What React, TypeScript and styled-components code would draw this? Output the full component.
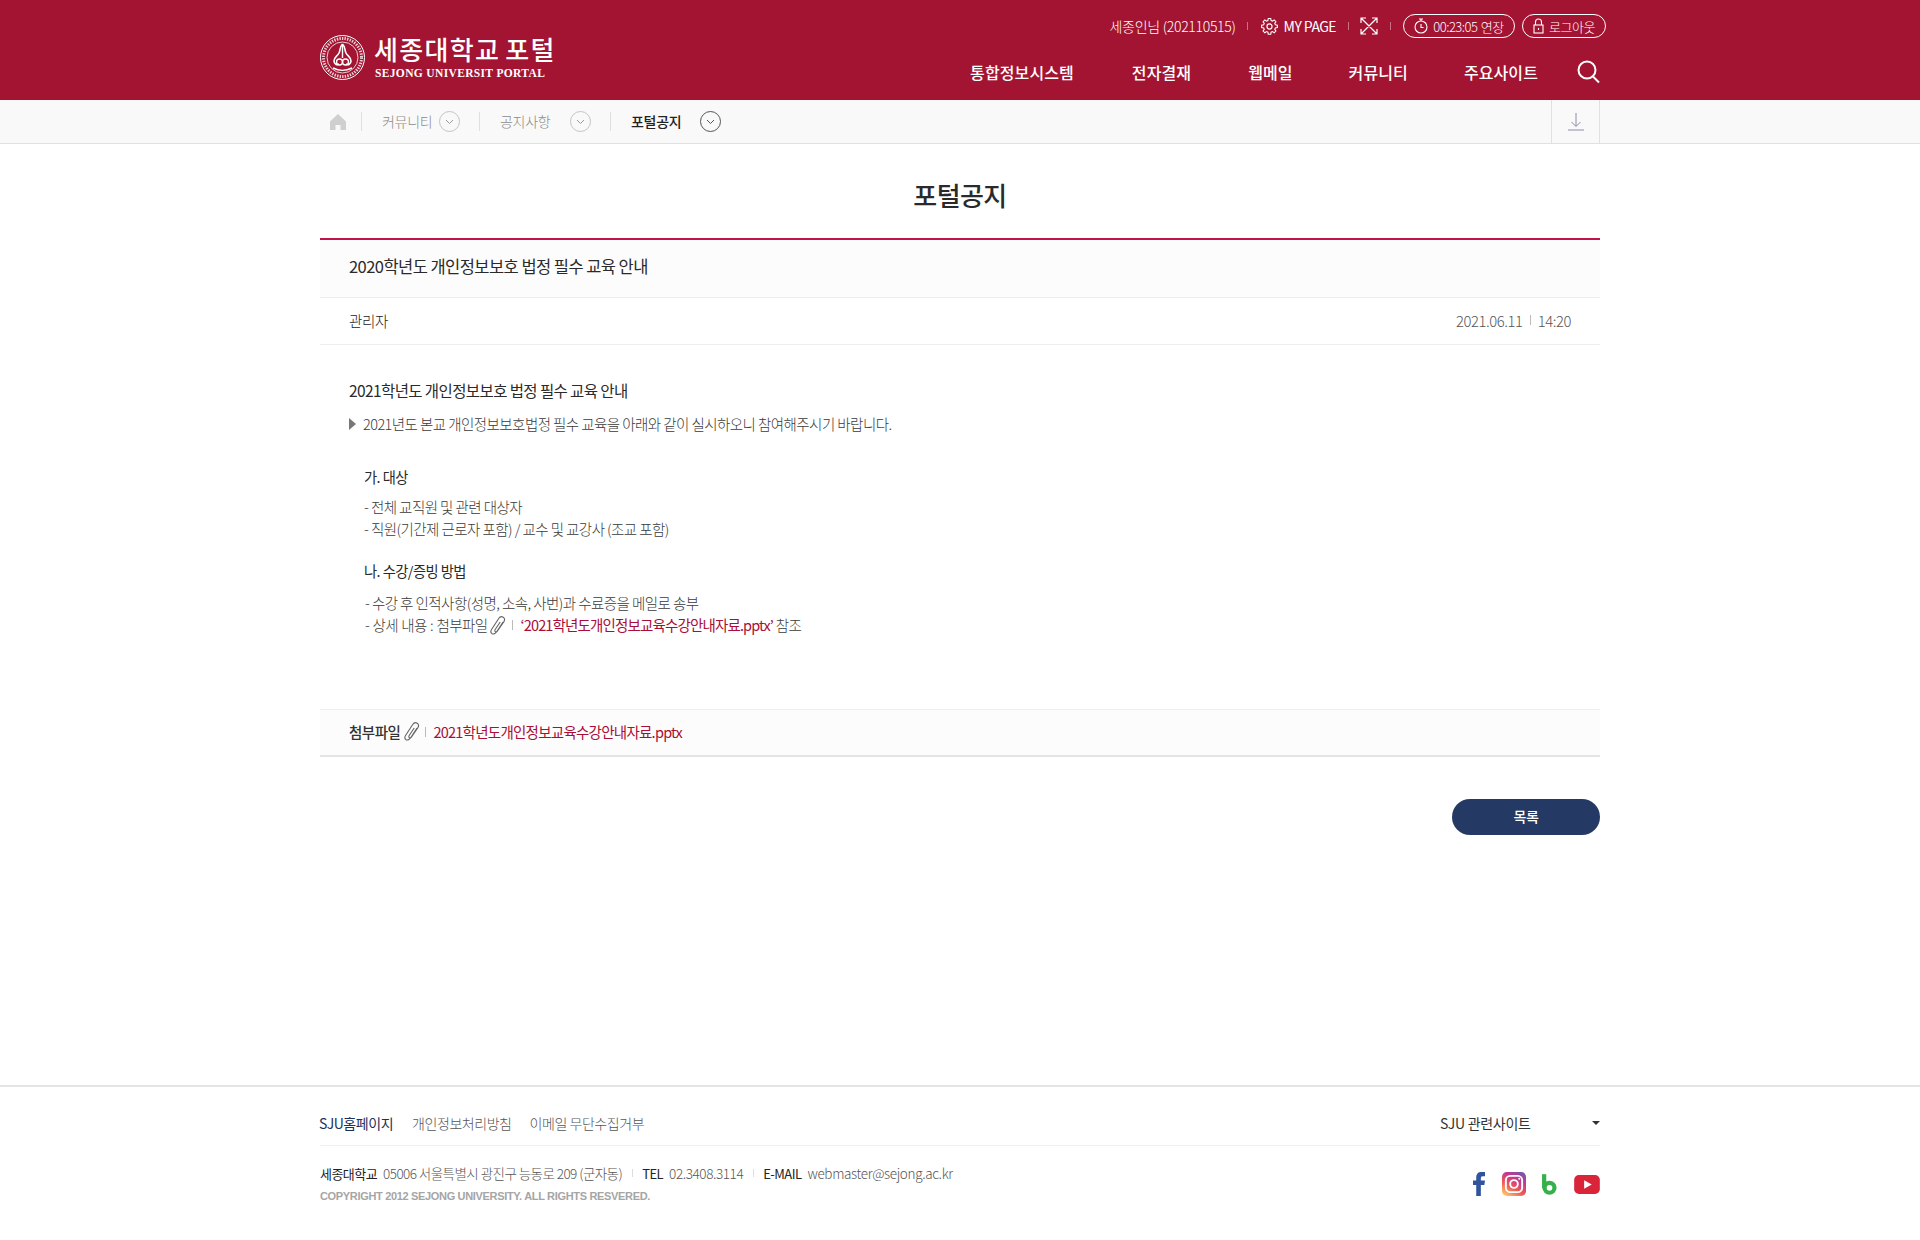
import React from "react";
import styled, { createGlobalStyle } from "styled-components";

const Global = createGlobalStyle`
  html, body { margin: 0; padding: 0; background: #fff; }
  body { font-family: "Noto Sans CJK KR", "Noto Sans", sans-serif; color: #333; }
  * { box-sizing: border-box; }
`;

const Page = styled.div`
  width: 1920px;
  min-height: 1240px;
  display: flex;
  flex-direction: column;
`;
const Header = styled.header`
  height: 100px;
  background: #a31432;
  color: #fff;
`;
const HeaderInner = styled.div`
  width: 1280px;
  height: 100%;
  margin: 0 auto;
  display: flex;
  justify-content: space-between;
`;
const Logo = styled.div`
  display: flex;
  align-items: center;
  gap: 10px;
  padding-top: 35px;
  box-sizing: content-box;
  height: 45px;
`;
const LogoText = styled.div`
  display: flex;
  flex-direction: column;
`;
const LogoKo = styled.div`
  font-size: 26px;
  line-height: 28px;
  font-weight: 500;
  letter-spacing: 1.3px;
  word-spacing: -2px;
  white-space: nowrap;
  margin-left: -1px;
`;
const LogoEn = styled.div`
  font-family: "Liberation Serif", serif;
  font-size: 11.5px;
  line-height: 15px;
  margin-top: 3px;
  font-weight: 700;
  letter-spacing: 0.35px;
  white-space: nowrap;
`;
const HeaderRight = styled.div`
  display: flex;
  flex-direction: column;
  align-items: flex-end;
`;
const Utils = styled.div`
  display: flex;
  align-items: center;
  height: 20px;
  margin-top: 16px;
  margin-right: -6px;
  font-size: 14px;
  font-weight: 300;
  letter-spacing: -0.3px;
`;
const UtilSep = styled.span<{ $l?: number; $r?: number }>`
  width: 1px;
  height: 8px;
  background: rgba(255, 255, 255, 0.4);
  margin: 0 ${(p) => p.$r ?? 12}px 0 ${(p) => p.$l ?? 12}px;
`;
const UtilLink = styled.span`
  display: flex;
  align-items: center;
  gap: 5px;
  white-space: nowrap;
`;
const MyPage = styled.span`
  letter-spacing: -0.55px;
  font-size: 14px;
  font-weight: 400;
`;
const Pill = styled.span<{ $w: number; $ml: number }>`
  width: ${(p) => p.$w}px;
  height: 24px;
  margin-left: ${(p) => p.$ml}px;
  border: 1px solid #fff;
  border-radius: 12px;
  display: flex;
  align-items: center;
  justify-content: center;
  gap: 5px;
  font-size: 13px;
  letter-spacing: -0.5px;
  word-spacing: 1px;
  white-space: nowrap;
`;
const Nav = styled.nav`
  display: flex;
  align-items: center;
  height: 26px;
  margin-top: 23px;
  font-size: 16px;
  font-weight: 500;
  letter-spacing: 0.1px;
`;
const NavItem = styled.span<{ $ml: number }>`
  margin-left: ${(p) => p.$ml}px;
  white-space: nowrap;
`;
const SearchBox = styled.span`
  display: flex;
  margin-left: 39px;
`;

const Crumbs = styled.div`
  height: 44px;
  background: #f9f9f9;
  border-bottom: 1px solid #e1e1e1;
`;
const CrumbsInner = styled.div`
  width: 1280px;
  height: 100%;
  margin: 0 auto;
  display: flex;
  align-items: center;
`;
const HomeBox = styled.span`
  display: flex;
  margin-left: 9px;
`;
const CrumbSep = styled.span<{ $ml: number }>`
  width: 1px;
  height: 19px;
  background: #e0e0e0;
  margin-left: ${(p) => p.$ml}px;
`;
const CrumbLabel = styled.span<{ $active?: boolean; $w: number }>`
  width: ${(p) => p.$w}px;
  margin-left: 20px;
  padding-bottom: 2px;
  font-size: 14px;
  letter-spacing: -0.3px;
  white-space: nowrap;
  font-weight: ${(p) => (p.$active ? 500 : 300)};
  color: ${(p) => (p.$active ? "#222" : "#8b8b8b")};
`;
const CrumbCircle = styled.span<{ $active?: boolean }>`
  width: 21px;
  height: 21px;
  border-radius: 50%;
  border: 1px solid ${(p) => (p.$active ? "#555" : "#c4c4c4")};
  display: flex;
  align-items: center;
  justify-content: center;
`;
const DownloadBox = styled.span`
  margin-left: auto;
  width: 49px;
  height: 100%;
  border-left: 1px solid #e1e1e1;
  border-right: 1px solid #e1e1e1;
  display: flex;
  align-items: center;
  justify-content: center;
`;

const Main = styled.main`
  width: 1280px;
  margin: 0 auto;
  flex: 1;
`;
const Title = styled.h1`
  margin: 0;
  height: 94px;
  padding-top: 30px;
  text-align: center;
  font-size: 26px;
  line-height: 42px;
  font-weight: 500;
  color: #2a2a2a;
  letter-spacing: -0.6px;
`;
const Subject = styled.div`
  height: 60px;
  border-top: 2px solid #c2124a;
  border-bottom: 1px solid #eee;
  background: #fcfcfc;
  padding: 0 29px;
  font-size: 16.5px;
  line-height: 52px;
  letter-spacing: -0.55px;
  color: #2a2a2a;
`;
const Meta = styled.div`
  height: 47px;
  padding-bottom: 2px;
  border-bottom: 1px solid #eee;
  padding-left: 29px;
  padding-right: 29px;
  display: flex;
  justify-content: space-between;
  align-items: center;
  font-size: 14.5px;
  font-weight: 300;
  letter-spacing: -0.4px;
  color: #222;
`;
const MetaDate = styled.div`
  display: flex;
  align-items: center;
  gap: 7px;
  color: #555;
  font-size: 14.8px;
`;
const TinySep = styled.span<{ $h?: number; $c?: string }>`
  display: inline-block;
  width: 1px;
  height: ${(p) => p.$h ?? 10}px;
  background: ${(p) => p.$c ?? "#bbb"};
`;
const Body = styled.div`
  height: 364px;
  padding: 33px 29px 0;
  font-weight: 300;
  font-size: 14.5px;
  letter-spacing: -0.56px;
  color: #3a3a3a;
`;
const BodyHead = styled.div`
  font-size: 15.5px;
  line-height: 24px;
  font-weight: 400;
  color: #2a2a2a;
  letter-spacing: -0.6px;
`;
const Lead = styled.div`
  display: flex;
  align-items: center;
  gap: 7px;
  margin-top: 10px;
  line-height: 24px;
`;
const Arrow = styled.span`
  width: 0;
  height: 0;
  border-left: 7px solid #777;
  border-top: 6px solid transparent;
  border-bottom: 6px solid transparent;
`;
const Section = styled.div<{ $ml: number; $mt: number }>`
  margin-left: ${(p) => p.$ml}px;
  margin-top: ${(p) => p.$mt}px;
`;
const SecHead = styled.div<{ $mb: number }>`
  font-size: 14.3px;
  line-height: 22px;
  font-weight: 400;
  color: #2a2a2a;
  margin-bottom: ${(p) => p.$mb}px;
`;
const Line = styled.div`
  display: flex;
  align-items: center;
  line-height: 22px;
  white-space: pre;
`;
const LeadIn = styled.span`
  word-spacing: 0.6px;
  margin-right: 2px;
`;
const Red = styled.span`
  color: #a90d38;
`;
const BodyLink = styled(Red)`
  font-weight: 400;
  letter-spacing: -0.85px;
`;
const InlineSep = styled(TinySep)`
  margin: 0 8px 0 6px;
`;
const Attach = styled.div`
  height: 48px;
  padding-bottom: 2px;
  border-top: 1px solid #eee;
  border-bottom: 2px solid #e4e4e4;
  background: #fcfcfc;
  padding-left: 29px;
  padding-right: 29px;
  display: flex;
  align-items: center;
  font-size: 14.5px;
  letter-spacing: -0.5px;
`;
const AttachLabel = styled.span`
  font-weight: 500;
  color: #333;
  margin-right: 4px;
`;
const AttachSep = styled(TinySep)`
  margin: 0 7px 0 5px;
`;
const AttachLink = styled(Red)`
  font-weight: 400;
  letter-spacing: -0.74px;
`;
const Actions = styled.div`
  display: flex;
  justify-content: flex-end;
  margin-top: 42px;
`;
const ListButton = styled.button`
  width: 148px;
  height: 36px;
  border: 0;
  border-radius: 18px;
  background: #243a64;
  color: #fff;
  font-family: inherit;
  font-size: 14px;
  font-weight: 500;
  letter-spacing: -0.3px;
  padding: 0 0 3px;
`;

const Footer = styled.footer`
  height: 155px;
  border-top: 2px solid #e4e4e4;
`;
const FooterInner = styled.div`
  width: 1280px;
  margin: 0 auto;
`;
const FooterTop = styled.div`
  height: 59px;
  padding-top: 13px;
  border-bottom: 1px solid #f0f0f0;
  display: flex;
  align-items: center;
  font-size: 14px;
  letter-spacing: -0.45px;
  font-weight: 300;
  color: #555;
`;
const FootLink = styled.span<{ $strong?: boolean }>`
  margin-right: ${(p) => (p.$strong ? 19 : 18)}px;
  margin-left: ${(p) => (p.$strong ? -1 : 0)}px;
  white-space: nowrap;
  color: ${(p) => (p.$strong ? "#1d2f5a" : "#555")};
  font-weight: ${(p) => (p.$strong ? 400 : 300)};
`;
const Related = styled.div`
  margin-left: auto;
  width: 160px;
  display: flex;
  align-items: center;
  justify-content: space-between;
  font-weight: 400;
  color: #333;
  letter-spacing: -0.3px;
`;
const Caret = styled.span`
  width: 0;
  height: 0;
  border-top: 4px solid #333;
  border-left: 4px solid transparent;
  border-right: 4px solid transparent;
`;
const FooterBottom = styled.div`
  display: flex;
  justify-content: space-between;
  align-items: center;
  padding-top: 16px;
`;
const Address = styled.div`
  display: flex;
  align-items: center;
  height: 22px;
  font-size: 13.5px;
  font-weight: 300;
  letter-spacing: -0.55px;
  color: #555;
  white-space: nowrap;
`;
const AddrLabel = styled.span`
  color: #222;
  font-size: 13px;
  font-weight: 400;
  margin-right: 6px;
`;
const AddrPhone = styled.span`
  letter-spacing: -0.4px;
`;
const AddrMail = styled.span`
  letter-spacing: -0.35px;
`;
const AddrSep = styled(TinySep)`
  margin: 0 9.5px;
`;
const Copyright = styled.div`
  font-family: "Liberation Sans", sans-serif;
  font-size: 11px;
  line-height: 16px;
  margin-top: 4px;
  color: #a5a5a5;
  font-weight: 700;
  letter-spacing: -0.33px;
`;
const Socials = styled.div`
  display: flex;
  align-items: center;
  gap: 16.7px;
  padding-top: 2px;
`;

const Chevron = ({ c }: { c: string }) => (
  <svg width="9" height="6" viewBox="0 0 9 6" fill="none" stroke={c}>
    <path d="M1 1l3.5 3.5L8 1" />
  </svg>
);
const Clip = () => (
  <svg width="16" height="19" viewBox="0 0 16 19" fill="none" stroke="#666" strokeWidth="1.1" style={{ flex: "none" }}>
    <path d="M13 6 6.500 16C5.200 18 3 18.500 1.900 17.600.7 16.700.6 14.900 1.700 13.200L8.700 2.500C9.800.9 11.800.4 13.200 1.300c1.400.9 1.700 2.700.7 4.300L7.500 15c-.6.900-1.600 1.100-2.200.7-.6-.4-.7-1.300-.1-2.200L10.200 6" />
  </svg>
);
const Seal = () => (
  <svg width="45" height="45" viewBox="0 0 45 45" fill="none" stroke="#fff">
    <circle cx="22.5" cy="22.5" r="22" strokeWidth="1" />
    <circle cx="22.5" cy="22.5" r="19" strokeWidth="3" strokeDasharray="1.4 1.2" opacity="0.8" />
    <circle cx="22.5" cy="22.5" r="15.5" strokeWidth="0.8" />
    <path d="M22.5 9c-3 3-2 6-3.5 9-1.5 3-5 4-5 8 0 3 3 4.500 5 3M22.500 9c3 3 2 6 3.500 9 1.500 3 5 4 5 8 0 3-3 4.500-5 3" strokeWidth="1.600" />
    <circle cx="19.500" cy="27" r="3" strokeWidth="1.400" />
    <circle cx="25.500" cy="27" r="3" strokeWidth="1.400" />
    <path d="M22.500 11v12M13 33c6 3 13 3 19 0" strokeWidth="1.400" />
  </svg>
);

export default function App() {
  return (
    <Page>
      <Global />
      <Header>
        <HeaderInner>
          <Logo>
            <Seal />
            <LogoText>
              <LogoKo>세종대학교 포털</LogoKo>
              <LogoEn>SEJONG UNIVERSIT PORTAL</LogoEn>
            </LogoText>
          </Logo>
          <HeaderRight>
            <Utils>
              <UtilLink>세종인님 (202110515)</UtilLink>
              <UtilSep $l={11} />
              <UtilLink>
                <svg width="19" height="19" viewBox="0 0 24 24" fill="none" stroke="#fff" strokeWidth="1.500">
                  <circle cx="12" cy="12" r="3.200" />
                  <path d="M10.300 2.500h3.400l.5 2.800 1.900.8 2.300-1.600 2.400 2.400-1.600 2.300.8 1.900 2.800.5v3.400l-2.800.5-.8 1.900 1.600 2.300-2.400 2.400-2.300-1.600-1.900.8-.5 2.800h-3.400l-.5-2.800-1.900-.8-2.300 1.600-2.400-2.400 1.600-2.300-.8-1.900-2.800-.5v-3.400l2.800-.5.8-1.900-1.600-2.300 2.400-2.400 2.300 1.600 1.900-.8z" transform="translate(12 12) scale(.92) translate(-12 -13.500)" />
                </svg>
                <MyPage>MY PAGE</MyPage>
              </UtilLink>
              <UtilSep $r={11} />
              <svg width="18" height="18" viewBox="0 0 18 18" fill="none" stroke="#fff" strokeWidth="1.200">
                <path d="M1 6V1h5M12 1h5v5M17 12v5h-5M6 17H1v-5M1 1l16 16M17 1 1 17" />
              </svg>
              <UtilSep />
              <Pill $w={112} $ml={0}>
                <svg width="14" height="16" viewBox="0 0 14 16" fill="none" stroke="#fff" strokeWidth="1.100">
                  <circle cx="7" cy="9" r="6" />
                  <path d="M7 1v2M5 1h4M7 6v3.500h2.500" />
                </svg>
                00:23:05 연장
              </Pill>
              <Pill $w={84} $ml={7}>
                <svg width="11" height="16" viewBox="0 0 11 16" fill="none" stroke="#fff" strokeWidth="1.100">
                  <rect x="1" y="7" width="9" height="8" />
                  <path d="M2.500 7V4a3 3 0 0 1 6 0v3M5.500 10v2" />
                </svg>
                로그아웃
              </Pill>
            </Utils>
            <Nav>
              <NavItem $ml={0}>통합정보시스템</NavItem>
              <NavItem $ml={58}>전자결재</NavItem>
              <NavItem $ml={57}>웹메일</NavItem>
              <NavItem $ml={56}>커뮤니티</NavItem>
              <NavItem $ml={56}>주요사이트</NavItem>
              <SearchBox>
                <svg width="23" height="24" viewBox="0 0 23 24" fill="none" stroke="#fff" strokeWidth="2">
                  <circle cx="10" cy="10" r="8.500" />
                  <path d="m16 16.500 6 6" />
                </svg>
              </SearchBox>
            </Nav>
          </HeaderRight>
        </HeaderInner>
      </Header>
      <Crumbs>
        <CrumbsInner>
          <HomeBox>
            <svg width="18" height="18" viewBox="0 0 18 18" fill="#cfcfcf">
              <path d="M9 1 1 8.500V17h5.500v-5h5v5H17V8.500z" />
            </svg>
          </HomeBox>
          <CrumbSep $ml={14} />
          <CrumbLabel $w={57}>커뮤니티</CrumbLabel>
          <CrumbCircle><Chevron c="#999" /></CrumbCircle>
          <CrumbSep $ml={19} />
          <CrumbLabel $w={70}>공지사항</CrumbLabel>
          <CrumbCircle><Chevron c="#999" /></CrumbCircle>
          <CrumbSep $ml={19} />
          <CrumbLabel $active $w={69}>포털공지</CrumbLabel>
          <CrumbCircle $active><Chevron c="#555" /></CrumbCircle>
          <DownloadBox>
            <svg width="18" height="19" viewBox="0 0 18 19" fill="none" stroke="#8a8fa8">
              <path d="M9 1v13M4.500 10 9 14.500 13.500 10M1 18h16" />
            </svg>
          </DownloadBox>
        </CrumbsInner>
      </Crumbs>
      <Main>
        <Title>포털공지</Title>
        <Subject>2020학년도 개인정보보호 법정 필수 교육 안내</Subject>
        <Meta>
          <span>관리자</span>
          <MetaDate>
            2021.06.11 <TinySep /> 14:20
          </MetaDate>
        </Meta>
        <Body>
          <BodyHead>2021학년도 개인정보보호 법정 필수 교육 안내</BodyHead>
          <Lead>
            <Arrow />
            2021년도 본교 개인정보보호법정 필수 교육을 아래와 같이 실시하오니 참여해주시기 바랍니다.
          </Lead>
          <Section $ml={15} $mt={30}>
            <SecHead $mb={8}>가. 대상</SecHead>
            <Line>- 전체 교직원 및 관련 대상자</Line>
            <Line>- 직원(기간제 근로자 포함) / 교수 및 교강사 (조교 포함)</Line>
          </Section>
          <Section $ml={15} $mt={20}>
            <SecHead $mb={10}>나. 수강/증빙 방법</SecHead>
            <Section $ml={1} $mt={0}>
              <Line>- 수강 후 인적사항(성명, 소속, 사번)과 수료증을 메일로 송부</Line>
              <Line>
                <LeadIn>- 상세 내용 : 첨부파일</LeadIn>
                <Clip />
                <InlineSep />
                <BodyLink>‘2021학년도개인정보교육수강안내자료.pptx’</BodyLink> 참조
              </Line>
            </Section>
          </Section>
        </Body>
        <Attach>
          <AttachLabel>첨부파일</AttachLabel>
          <Clip />
          <AttachSep />
          <AttachLink>2021학년도개인정보교육수강안내자료.pptx</AttachLink>
        </Attach>
        <Actions>
          <ListButton>목록</ListButton>
        </Actions>
      </Main>
      <Footer>
        <FooterInner>
          <FooterTop>
            <FootLink $strong>SJU홈페이지</FootLink>
            <FootLink>개인정보처리방침</FootLink>
            <FootLink>이메일 무단수집거부</FootLink>
            <Related>
              SJU 관련사이트
              <Caret />
            </Related>
          </FooterTop>
          <FooterBottom>
            <div>
              <Address>
                <AddrLabel>세종대학교</AddrLabel>
                05006 서울특별시 광진구 능동로 209 (군자동)
                <AddrSep $h={8} $c="#ddd" />
                <AddrLabel>TEL</AddrLabel>
                <AddrPhone>02.3408.3114</AddrPhone>
                <AddrSep $h={8} $c="#ddd" />
                <AddrLabel>E-MAIL</AddrLabel>
                <AddrMail>webmaster@sejong.ac.kr</AddrMail>
              </Address>
              <Copyright>COPYRIGHT 2012 SEJONG UNIVERSITY. ALL RIGHTS RESVERED.</Copyright>
            </div>
            <Socials>
              <svg width="12" height="24" viewBox="0 0 13 24" fill="#30559d" preserveAspectRatio="none">
                <path d="M3.500 24V13H0V8.500h3.500V5.500C3.500 2 5.500 0 9 0h4v4.300h-2.500c-1.500 0-2 .7-2 2V8.500H13L12.300 13H8.500v11z" />
              </svg>
              <svg width="24" height="24" viewBox="0 0 25 25" fill="none">
                <defs>
                  <linearGradient id="ig" x1="0.200" y1="1" x2="0.800" y2="0">
                    <stop offset="0" stopColor="#fdc468" />
                    <stop offset="0.350" stopColor="#ee5a55" />
                    <stop offset="0.700" stopColor="#c7368f" />
                    <stop offset="1" stopColor="#7a55a8" />
                  </linearGradient>
                </defs>
                <rect width="25" height="25" rx="5" fill="url(#ig)" />
                <rect x="4" y="4" width="17" height="17" rx="4.500" stroke="#fff" strokeWidth="2" />
                <circle cx="12.500" cy="12.500" r="4" stroke="#fff" strokeWidth="2" />
                <circle cx="18" cy="7" r="1.100" fill="#fff" />
              </svg>
              <svg width="15" height="21" viewBox="0 0 16 22" fill="none" stroke="#35b04a" strokeWidth="4.500">
                <path d="M2.300 0v15" />
                <circle cx="8" cy="14.500" r="5.300" />
              </svg>
              <svg width="26" height="19" viewBox="0 0 27 20">
                <rect width="27" height="20" rx="5" fill="#d9243a" />
                <path d="M10.500 5.500v9l8-4.500z" fill="#fff" />
              </svg>
            </Socials>
          </FooterBottom>
        </FooterInner>
      </Footer>
    </Page>
  );
}
